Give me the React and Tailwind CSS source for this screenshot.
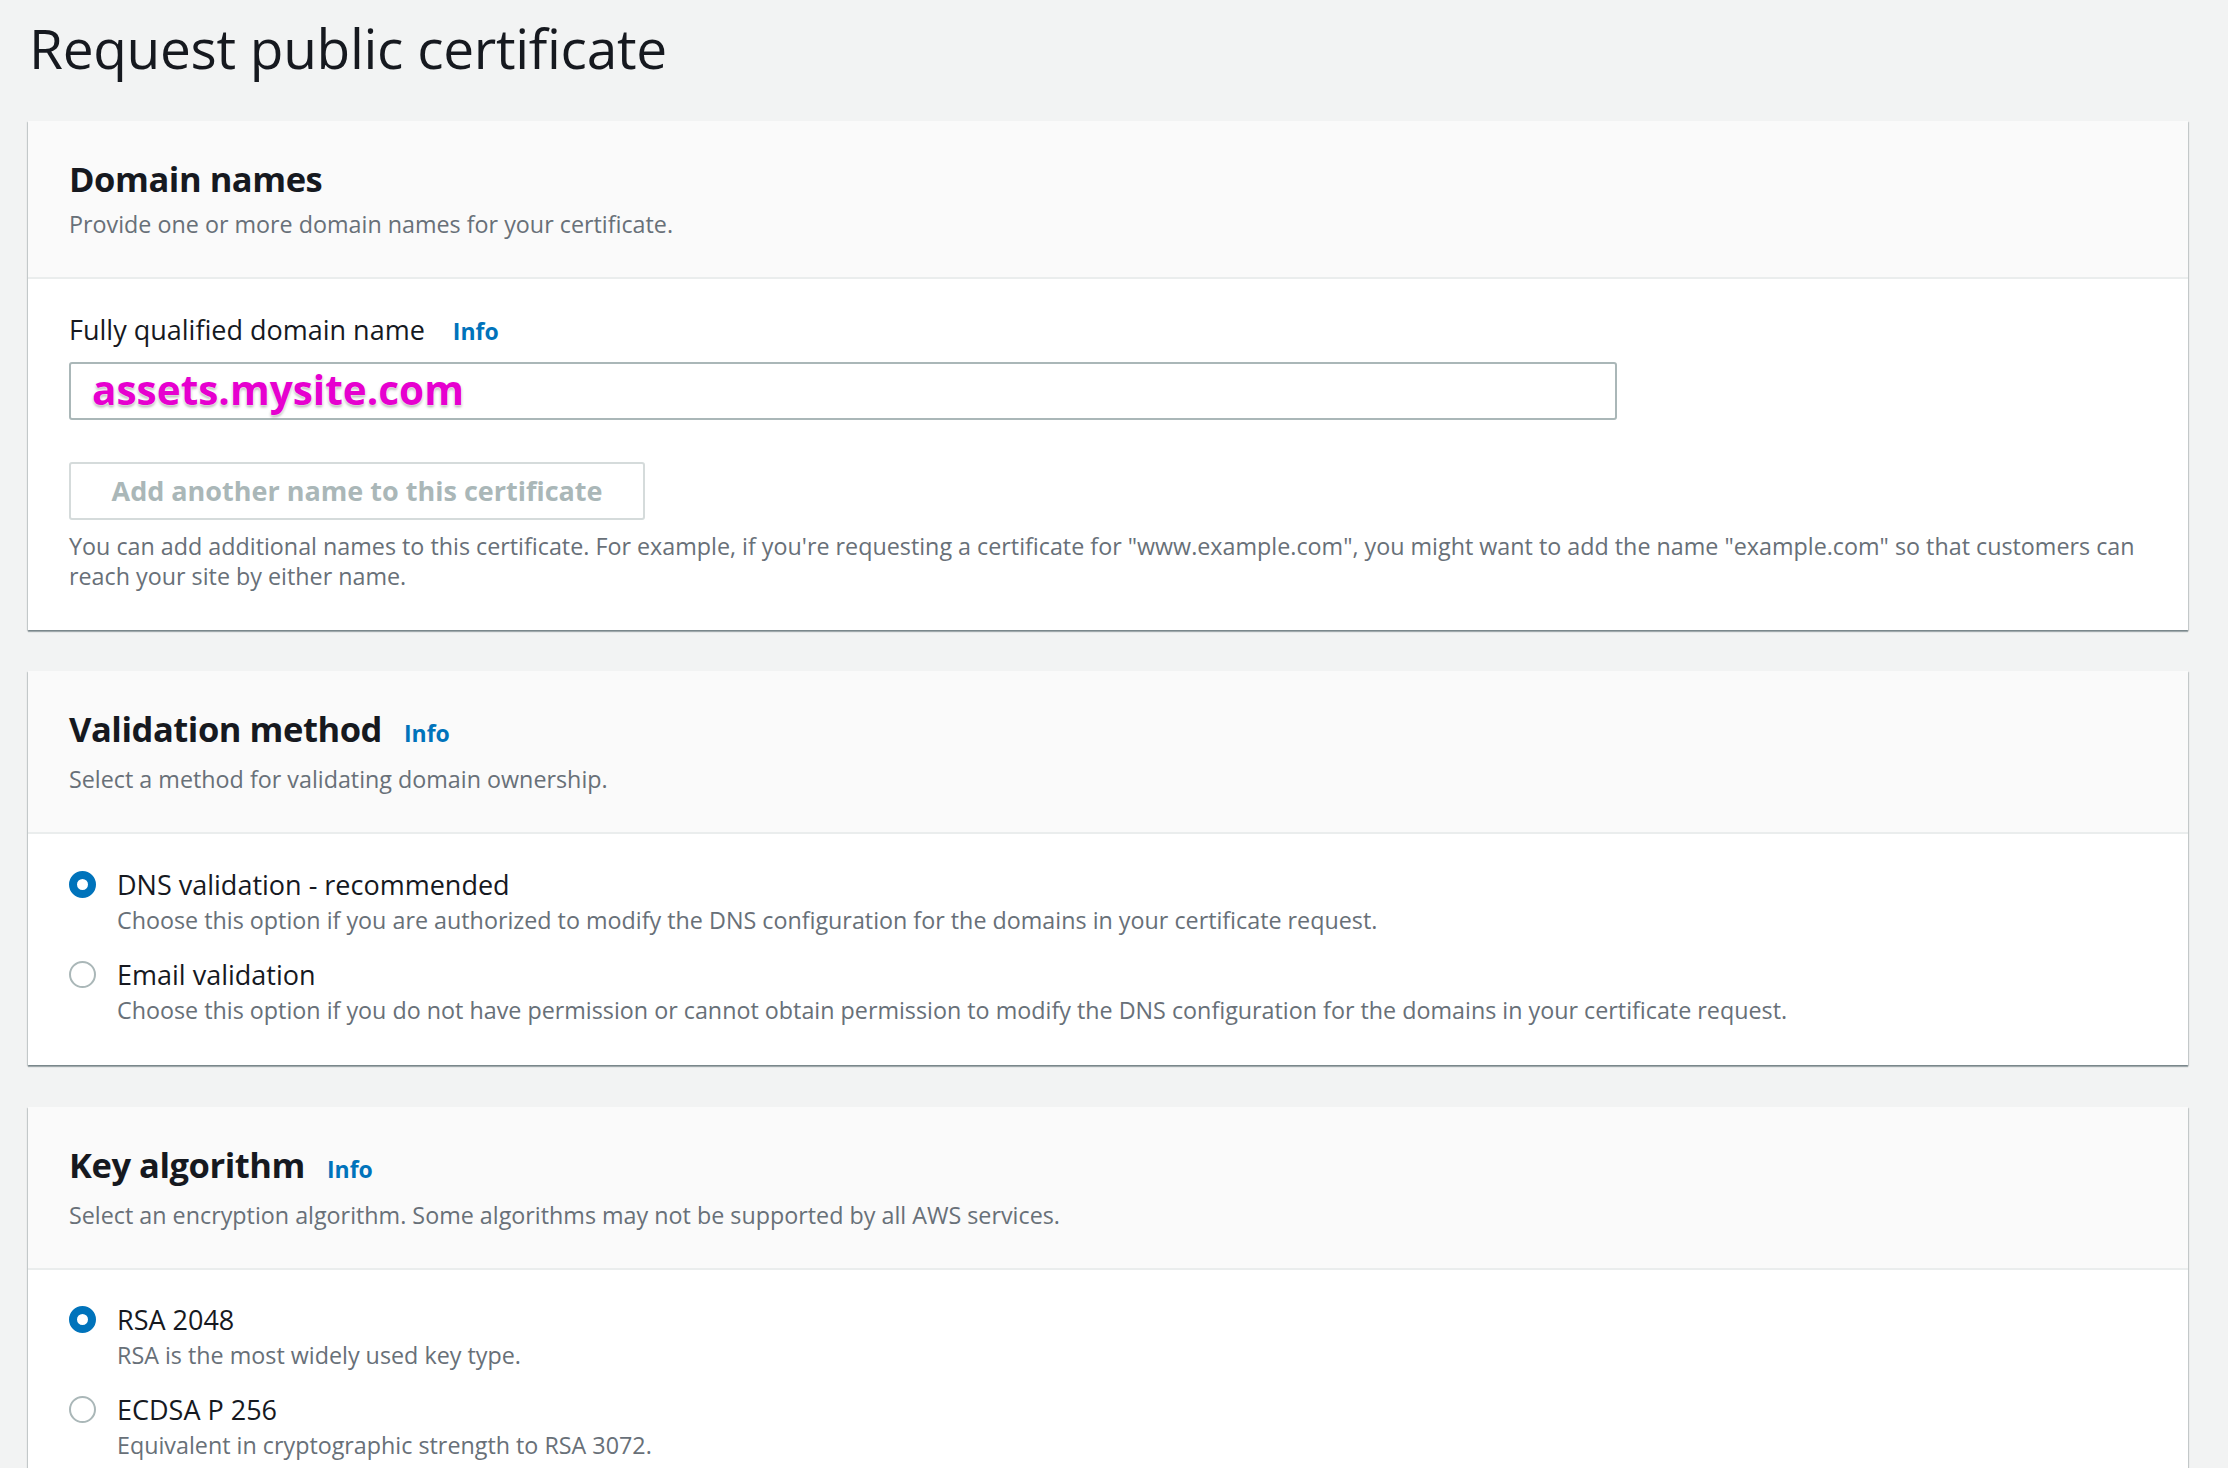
import React from "react";

const shadow =
  "shadow-[0_2px_1px_0_rgba(0,28,36,0.3),1px_1px_1px_0_rgba(0,28,36,0.15),-1px_1px_1px_0_rgba(0,28,36,0.15)]";

function Info({ className = "" }) {
  return (
    <span className={"text-[23px] leading-[30px] font-bold text-[#0073bb] " + className}>Info</span>
  );
}

function CardHeader({ title, info, subtitle }) {
  return (
    <div className="bg-[#fafafa] border-b-2 border-[#eaeded] px-[41px] pt-[36px] pb-[38px]">
      <div className="flex items-baseline">
        <h2 className="text-[34.5px] leading-[44px] font-bold tracking-[-0.45px] text-[#16191f]">{title}</h2>
        {info && <Info className="ml-[22px]" />}
      </div>
      <p className={"text-[23.3px] leading-[30px] text-[#687078] " + (info ? "mt-[13px]" : "mt-[8px]")}>
        {subtitle}
      </p>
    </div>
  );
}

function Radio({ checked }) {
  return checked ? (
    <span className="mt-[4px] h-[27px] w-[27px] shrink-0 rounded-full border-[8px] border-[#0073bb] bg-white" />
  ) : (
    <span className="mt-[4px] h-[27px] w-[27px] shrink-0 rounded-full border-2 border-[#aab7b8] bg-white" />
  );
}

function Option({ checked, label, desc, first }) {
  return (
    <div className={"flex gap-[21px] " + (first ? "" : "mt-[22px]")}>
      <Radio checked={checked} />
      <div>
        <div className="text-[27px] leading-[36px] text-[#16191f]">{label}</div>
        <div className="mt-[2px] text-[23.3px] leading-[30px] text-[#687078]">{desc}</div>
      </div>
    </div>
  );
}

export default function App() {
  return (
    <div className="min-h-screen bg-[#f2f3f3] font-['Open_Sans',sans-serif] pl-[28px] pr-[40px] pt-[14px] pb-[40px]">
      <h1 className="text-[55px] leading-[68px] font-normal tracking-[-0.3px] text-[#16191f] pl-[1px]">
        Request public certificate
      </h1>

      <section className={"mt-[39px] bg-white " + shadow}>
        <CardHeader title="Domain names" subtitle="Provide one or more domain names for your certificate." />
        <div className="px-[41px] pt-[33px] pb-[39px]">
          <div className="flex items-baseline">
            <span className="text-[27px] leading-[36px] text-[#16191f]">Fully qualified domain name</span>
            <Info className="ml-[28px]" />
          </div>
          <div className="mt-[14px] flex h-[58px] w-[1548px] items-center rounded-[3px] border-2 border-[#aab7b8] bg-white px-[21px]">
            <span className="-mt-[3px] text-[40.5px] leading-[48px] font-bold text-[#e600cf] [text-shadow:0_0_2px_#fff,0_0_2px_#fff,0_2px_3px_rgba(0,0,0,0.35)]">
              assets.mysite.com
            </span>
          </div>
          <div className="mt-[42px] flex h-[58px] w-[576px] items-center justify-center rounded-[3px] border-2 border-[#d5dbdb] bg-white">
            <span className="text-[27px] leading-[36px] font-bold text-[#aab7b8]">Add another name to this certificate</span>
          </div>
          <p className="mt-[11px] text-[23.3px] leading-[30px] text-[#687078]">
            <span className="whitespace-nowrap">
              You can add additional names to this certificate. For example, if you're requesting a certificate for "www.example.com", you might want to add the name "example.com" so that customers can
            </span>
            <br />
            reach your site by either name.
          </p>
        </div>
      </section>

      <section className={"mt-[41px] bg-white " + shadow}>
        <CardHeader title="Validation method" info subtitle="Select a method for validating domain ownership." />
        <div className="px-[41px] pt-[33px] pb-[40px]">
          <Option
            first
            checked
            label="DNS validation - recommended"
            desc="Choose this option if you are authorized to modify the DNS configuration for the domains in your certificate request."
          />
          <Option
            label="Email validation"
            desc="Choose this option if you do not have permission or cannot obtain permission to modify the DNS configuration for the domains in your certificate request."
          />
        </div>
      </section>

      <section className={"mt-[42px] bg-white " + shadow}>
        <CardHeader
          title="Key algorithm"
          info
          subtitle="Select an encryption algorithm. Some algorithms may not be supported by all AWS services."
        />
        <div className="px-[41px] pt-[32px] pb-[39px]">
          <Option first checked label="RSA 2048" desc="RSA is the most widely used key type." />
          <Option label="ECDSA P 256" desc="Equivalent in cryptographic strength to RSA 3072." />
        </div>
      </section>
    </div>
  );
}
